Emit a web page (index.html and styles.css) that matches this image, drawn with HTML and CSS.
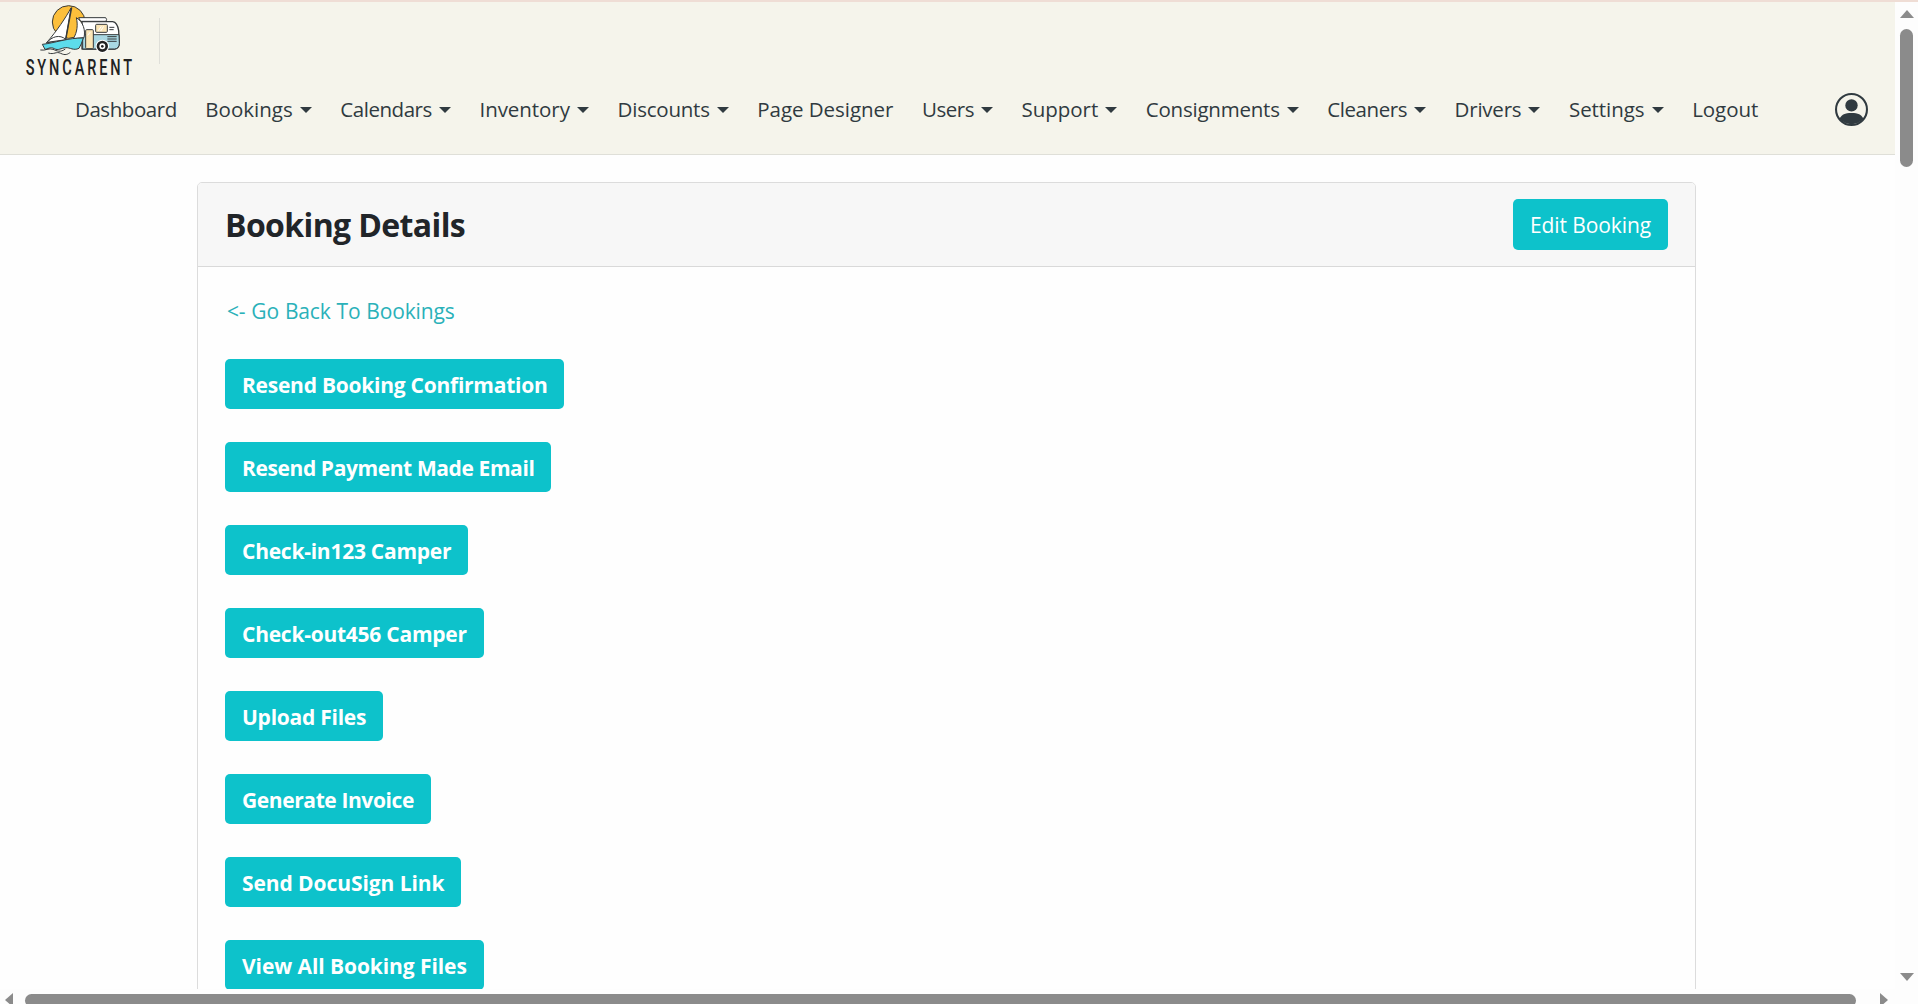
FILE: index.html
```
<!DOCTYPE html>
<html lang="en">

<head>
    <title>Booking Details | Syncarent</title>
    <meta charset="UTF-8">
    <meta name="viewport" content="width=device-width,initial-scale=1" />
    <link rel="stylesheet" href="styles.css">
</head>

<body>
    <div class="page">
        <header class="navbar">
            <div class="brand">
                <svg class="logo" viewBox="0 0 360 252" role="img" aria-label="Syncarent">
                    <circle cx="146" cy="66" r="49" fill="#fcbf3b" stroke="#3a3a35" stroke-width="3" />
                    <!-- camper -->
                    <g stroke="#35393b" stroke-width="4" stroke-linejoin="round">
                        <path d="M186 65H278Q292 67 296 92L298 130Q297 146 284 147H186Z" fill="#fff" />
                        <path d="M188 104H297L298 130Q297 146 284 147H188Z" fill="#a9d8e3" stroke-width="3" />
                        <path d="M176 53H257Q262 58 258 64H182Z" fill="#fff" stroke-width="3" />
                        <rect x="197" y="89" width="23" height="57" rx="3" fill="#fbe6b7" stroke-width="3" />
                        <rect x="227" y="73" width="35" height="24" rx="3" fill="#fbe6b7" stroke-width="3" />
                        <path d="M235 92L244 79M242 93L251 79M203 106L211 96" fill="none" stroke="#fff" stroke-width="3" />
                        <path d="M268 82H283M268 89H281M262 110H290M262 117H290M262 124H290" fill="none" stroke-width="3" />
                    </g>
                    <circle cx="247" cy="139" r="20" fill="#fff" />
                    <circle cx="247" cy="139" r="13" fill="#fff" stroke="#222" stroke-width="8" />
                    <circle cx="247" cy="139" r="4" fill="#222" />
                    <!-- boat -->
                    <g stroke="#35393b" stroke-width="3" stroke-linejoin="round">
                        <path d="M153 24C137 53 112 91 79 129L137 116Z" fill="#fff" />
                        <path d="M81 127C95 111 118 101 139 119Z" fill="#fff" />
                        <path d="M169 53C190 66 197 91 192 113L160 116C172 96 174 75 169 53Z" fill="#fff" />
                        <path d="M155 22L137 120" fill="none" stroke-width="4" />
                        <path d="M67 133C105 129 145 113 190 114Q184 134 177 145C160 153 151 142 137 143S115 153 103 146S82 148 75 148Z" fill="#5ddceb" />
                        <path d="M61 150C76 153 87 143 99 148S121 158 136 147M85 159C103 165 108 153 122 160S143 163 151 157" fill="none" />
                    </g>
                    <text class="logo-text" transform="translate(17 225) scale(.64 1)" textLength="499">SYNCARENT</text>
                </svg>
                <span class="divider"></span>
            </div>
            <nav class="menu">
                <a class="tight" href="#">Dashboard</a>
                <a class="dropdown loose" href="#">Bookings</a>
                <a class="dropdown tight" href="#">Calendars</a>
                <a class="dropdown wide" href="#">Inventory</a>
                <a class="dropdown" href="#">Discounts</a>
                <a class="wide" href="#">Page Designer</a>
                <a class="dropdown tight" href="#">Users</a>
                <a class="dropdown wide" href="#">Support</a>
                <a class="dropdown" href="#">Consignments</a>
                <a class="dropdown tight" href="#">Cleaners</a>
                <a class="dropdown" href="#">Drivers</a>
                <a class="dropdown wide" href="#">Settings</a>
                <a class="wide" href="#">Logout</a>
                <a class="account" href="#" title="Account">
                    <svg viewBox="0 0 32 32" width="33" height="33">
                        <circle cx="16" cy="16" r="15" fill="none" stroke="#303a40" stroke-width="2" />
                        <circle cx="16" cy="12" r="6" fill="#303a40" />
                        <path d="M4.500 25C6.500 21 9.500 19.500 16 19.500S25.500 21 27.500 25A15 15 0 0 1 4.500 25Z" fill="#303a40" />
                    </svg>
                </a>
            </nav>
        </header>
        <main class="card">
            <div class="card-header">
                <h1>Booking Details</h1>
                <a class="btn btn-edit" href="#">Edit Booking</a>
            </div>
            <div class="card-body">
                <a class="back" href="#">&lt;- Go Back To Bookings</a>
                <div class="actions">
                    <button class="btn">Resend Booking Confirmation</button>
                    <button class="btn narrow">Resend Payment Made Email</button>
                    <button class="btn">Check-in123 Camper</button>
                    <button class="btn">Check-out456 Camper</button>
                    <button class="btn">Upload Files</button>
                    <button class="btn narrow">Generate Invoice</button>
                    <button class="btn normal">Send DocuSign Link</button>
                    <button class="btn normal">View All Booking Files</button>
                </div>
            </div>
        </main>
    </div>
    <div class="scroll-y">
        <span class="arrow up"></span>
        <span class="thumb"></span>
        <span class="arrow down"></span>
    </div>
    <div class="scroll-x">
        <span class="arrow left"></span>
        <span class="thumb"></span>
        <span class="arrow right"></span>
    </div>
</body>

</html>
```
FILE: styles.css
```
* {
    box-sizing: border-box;
}

body {
    background: #fefefe;
    color: #212529;
    display: grid;
    font-family: 'Open Sans', sans-serif;
    font-size: 21px;
    grid-template-columns: 1895px 1fr;
    grid-template-rows: minmax(0, 1fr) 15px;
    height: 100vh;
    margin: 0;
    overflow: hidden;
}

a {
    text-decoration: none;
}

.page {
    border-top: 2px solid #efddd5;
    overflow: hidden;
}

/* Navbar */
.navbar {
    background: #f5f4eb;
    border-bottom: 1px solid #dfdfd8;
    height: 153px;
}

.brand {
    display: flex;
    height: 81px;
    padding-left: 20px;
}

.logo {
    display: block;
    height: 84px;
    margin-top: -2px;
    width: 120px;
}

.logo-text {
    fill: #222;
    font-family: Roboto, sans-serif;
    font-size: 68px;
    font-weight: 500;
}

.divider {
    background: #dfdfd9;
    height: 46px;
    margin: 16px 0 0 19px;
    width: 1px;
}

.menu {
    align-items: center;
    display: flex;
    font-size: 20.5px;
    font-weight: 500;
    gap: 28.6px;
    height: 52px;
    letter-spacing: -0.22px;
    padding: 0 27px 0 75px;
}

.menu a {
    color: #303a40;
    white-space: nowrap;
}

.menu .tight {
    letter-spacing: -0.45px;
}

.menu .wide {
    letter-spacing: -0.05px;
}

.menu .loose {
    letter-spacing: 0;
}

.dropdown::after {
    border: 6px solid transparent;
    border-bottom: 0;
    border-top-color: #303a40;
    content: "";
    display: inline-block;
    margin-left: 7px;
    vertical-align: 4px;
}

.menu .account {
    display: flex;
    margin-left: auto;
}

/* Card */
.card {
    border: 1px solid #dcdcdc;
    border-radius: 5px;
    height: 1200px;
    margin: 27px auto 0 197px;
    width: 1499px;
}

.card-header {
    align-items: center;
    background: #f7f7f7;
    border-bottom: 1px solid #d9d9d9;
    border-radius: 4px 4px 0 0;
    display: flex;
    height: 84px;
    justify-content: space-between;
    padding: 0 27px;
}

h1 {
    font-size: 32px;
    font-weight: 700;
    letter-spacing: -0.62px;
    line-height: 40px;
    margin: 0;
}

.card-body {
    padding: 28px 27px;
}

.back {
    color: #2ab1b9;
    display: block;
    letter-spacing: -0.15px;
    line-height: 32px;
    margin: 0 0 32px 2px;
    word-spacing: 0.6px;
}

.actions {
    align-items: flex-start;
    display: flex;
    flex-direction: column;
    gap: 33px;
}

.btn {
    background: #0dc2cb;
    border: 0;
    border-radius: 5px;
    color: #fff;
    cursor: pointer;
    font: 700 21px/30px 'Open Sans', sans-serif;
    height: 50px;
    letter-spacing: -0.25px;
    padding: 11px 17px 9px;
}

.btn.narrow {
    letter-spacing: -0.4px;
}

.btn.normal {
    letter-spacing: -0.08px;
}

.btn-edit {
    font-weight: 400;
    height: 51px;
    letter-spacing: -0.1px;
}

/* Scrollbars */
.scroll-y {
    align-items: center;
    background: #fdfdfd;
    border-top: 2px solid #efddd5;
    display: flex;
    flex-direction: column;
    padding: 8px 0 8px;
}

.scroll-y .thumb {
    background: #8b8b8b;
    border-radius: 7px;
    height: 138px;
    margin: 11px 0 auto;
    width: 13px;
}

.scroll-x {
    background: #fdfdfd;
    display: flex;
    grid-column: 1 / 3;
    padding: 4px 30px 0 5px;
}

.scroll-x .thumb {
    background: #8b8b8b;
    border-radius: 7px;
    flex: 1;
    height: 13px;
    margin: 1px 24px 0 12px;
}

.arrow {
    border: 0 solid transparent;
    height: 0;
    width: 0;
}

.up {
    border-width: 0 7.5px 8px;
    border-bottom-color: #8b8b8b;
}

.down {
    border-width: 8px 7.5px 0;
    border-top-color: #8b8b8b;
}

.left {
    border-width: 7px 8px 7px 0;
    border-right-color: #8b8b8b;
}

.right {
    border-width: 7px 0 7px 8px;
    border-left-color: #8b8b8b;
}
```
